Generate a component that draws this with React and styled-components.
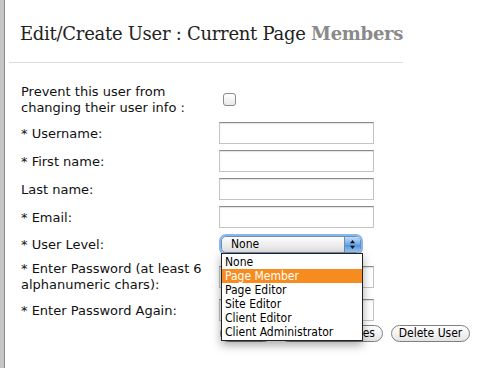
import React from 'react';
import styled, {createGlobalStyle} from 'styled-components';

const Global = createGlobalStyle`
  html, body { margin: 0; padding: 0; background: #fff; }
  body { width: 502px; height: 368px; overflow: hidden; }
`

const Page = styled.div`
  display: flex;
  height: 368px;
`

const Strip = styled.div`
  width: 4px;
  flex: none;
  background: #c6c6c6;
  border-right: 1px solid #8c8c8c;
`

const Main = styled.div`
  width: 394px;
  margin-left: 4px;
`

const Title = styled.h2`
  margin: 0;
  padding: 22px 0 0 11px;
  height: 39px;
  box-sizing: border-box;
  font-family: "DejaVu Serif", serif;
  font-weight: normal;
  font-size: 18px;
  line-height: 24px;
  letter-spacing: -0.28px;
  color: #222;
  white-space: nowrap;

  & b {
    color: #8a8a8a;
  }
`

const Rule = styled.div`
  height: 1px;
  background: #dcdcdc;
  margin-top: 23px;
`

const Form = styled.div`
  display: grid;
  grid-template-columns: 198px 1fr;
  row-gap: 6px;
  align-items: center;
  padding: 20px 0 0 12px;
  font-family: "DejaVu Sans", sans-serif;
  font-size: 13px;
  color: #111;
`

const Label = styled.div`
  line-height: 16px;
  padding-top: 1px;
`

const Check = styled.div`
  width: 11px;
  height: 11px;
  margin-left: 4px;
  border: 1px solid #8a8a8a;
  border-radius: 3px;
  background: linear-gradient(#fff, #e9e9e9);
`

const Input = styled.div`
  width: 153px;
  height: 20px;
  border: 1px solid #c4c4c4;
  border-top-color: #8c8c8c;
  box-shadow: inset 0 1px 1px rgba(0, 0, 0, 0.12);
  background: #fff;
`

const SelectCell = styled.div`
  position: relative;
  height: 20px;
  display: flex;
  align-items: center;
`

const Select = styled.div`
  display: flex;
  width: 138px;
  height: 15px;
  margin-left: 2px;
  border: 1px solid #6c8db8;
  border-radius: 5px;
  box-shadow: 0 0 0 2px #86b6eb;
  background: linear-gradient(#fdfdfd, #ececec 55%, #e2e2e2);
  overflow: hidden;
  font-family: "DejaVu Sans Condensed", "DejaVu Sans", sans-serif;
  font-size: 12px;
  line-height: 15px;
  color: #000;
`

const SelectText = styled.div`
  flex: 1;
  padding-left: 9px;
`

const Arrows = styled.div`
  width: 15px;
  border-left: 1px solid #6c8db8;
  background: linear-gradient(#c4ddf7, #6aa6e8 50%, #4b8fdc 51%, #9ccaf4);
  display: flex;
  align-items: center;
  justify-content: center;
`

const Menu = styled.div`
  position: absolute;
  left: 2px;
  top: 19px;
  width: 140px;
  padding: 1px 0;
  border: 1px solid #222;
  background: #fff;
  box-shadow: 0 4px 9px rgba(0, 0, 0, 0.35);
  font-family: "DejaVu Sans Condensed", "DejaVu Sans", sans-serif;
  font-size: 12px;
  line-height: 14px;
  z-index: 2;
`

const Option = styled.div`
  padding-left: 3px;
  height: 14px;
  color: ${p => (p.$active ? '#fff' : '#000')};
  background: ${p => (p.$active ? '#f68b1f' : 'transparent')};
`

const Buttons = styled.div`
  grid-column: 2;
  display: flex;
  gap: 8px;
  margin: -2px 0 0 1px;
`

const Button = styled.div`
  width: ${p => p.$width}px;
  height: 17px;
  box-sizing: border-box;
  border: 1px solid #7e7e7e;
  border-radius: 9px;
  background: linear-gradient(#ffffff, #f3f3f3 50%, #e3e3e3);
  font-family: "DejaVu Sans Condensed", "DejaVu Sans", sans-serif;
  font-size: 12px;
  line-height: 15px;
  text-align: ${p => p.$align || 'center'};
  padding-right: ${p => (p.$align ? '7px' : '0')};
  color: #000;
  white-space: nowrap;
  overflow: hidden;
`

const levels = ['None', 'Page Member', 'Page Editor', 'Site Editor', 'Client Editor', 'Client Administrator']

const fields = [
  {label: '* Username:'},
  {label: '* First name:'},
  {label: 'Last name:'},
  {label: '* Email:'},
]

const App = () => (
  <Page>
    <Global />
    <Strip />
    <Main>
      <Title>Edit/Create User : Current Page <b>Members</b></Title>
      <Rule />
      <Form>
        <Label>Prevent this user from<br />changing their user info :</Label>
        <div><Check /></div>

        {fields.map(f => (
          <React.Fragment key={f.label}>
            <Label>{f.label}</Label>
            <Input />
          </React.Fragment>
        ))}

        <Label>* User Level:</Label>
        <SelectCell>
          <Select>
            <SelectText>None</SelectText>
            <Arrows>
              <svg width="7" height="11" viewBox="0 0 7 11">
                <path d="M3.5 1 L6 4.2 L1 4.2 Z" fill="#111" />
                <path d="M3.5 10 L6 6.8 L1 6.8 Z" fill="#111" />
              </svg>
            </Arrows>
          </Select>
          <Menu>
            {levels.map(l => (
              <Option key={l} $active={l === 'Page Member'}>{l}</Option>
            ))}
          </Menu>
        </SelectCell>

        <Label>* Enter Password (at least 6<br />alphanumeric chars):</Label>
        <Input />

        <Label>* Enter Password Again:</Label>
        <Input />

        <Buttons>
          <Button $width={52}>Cancel</Button>
          <Button $width={103} $align="right">Save Changes</Button>
          <Button $width={79}>Delete User</Button>
        </Buttons>
      </Form>
    </Main>
  </Page>
)

export default App
